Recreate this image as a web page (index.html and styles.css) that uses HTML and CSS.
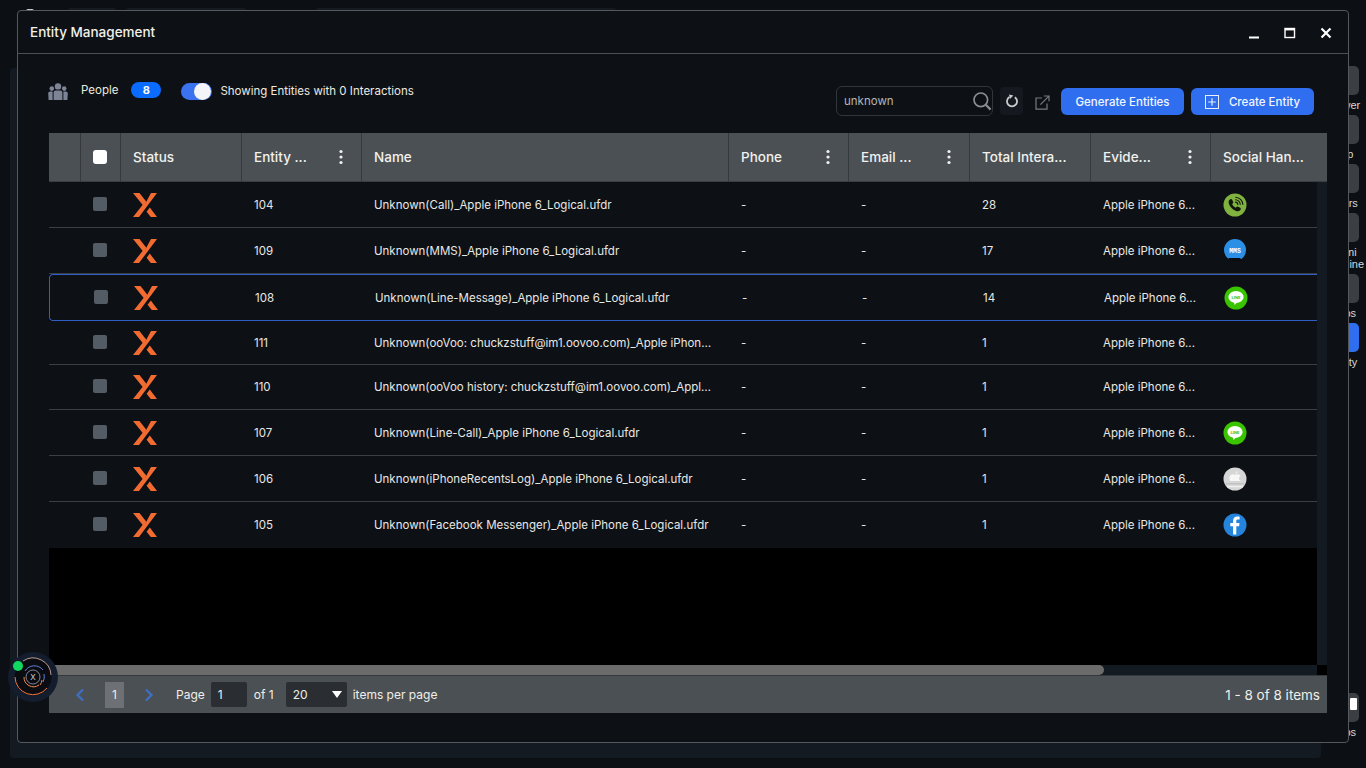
FILE: index.html
```html
<!DOCTYPE html>
<html lang="en">
<head>
<meta charset="utf-8">
<title>Entity Management</title>
<link rel="stylesheet" href="styles.css">
</head>
<body>
<svg class="defs" width="0" height="0" aria-hidden="true">
  <symbol id="logo-x" viewBox="0 0 24 24">
    <polygon fill="#f26c32" points="18,0 24,0 6,24 0,24 11.5,9.5 12.3,10.6"/>
    <polygon fill="#f26c32" points="0,0 6.5,0 13.5,9 10.6,13"/>
    <polygon fill="#f26c32" points="16.8,14.6 24,24 17.8,24 13.6,18.7"/>
  </symbol>
  <symbol id="kebab" viewBox="0 0 4 16">
    <circle cx="2" cy="2.5" r="1.6" fill="#f1f1f1"/><circle cx="2" cy="8" r="1.6" fill="#f1f1f1"/><circle cx="2" cy="13.5" r="1.6" fill="#f1f1f1"/>
  </symbol>
  <symbol id="ic-line" viewBox="0 0 24 24">
    <circle cx="12" cy="12" r="11.5" fill="#3ac400"/>
    <ellipse cx="12" cy="11" rx="7.6" ry="6" fill="#fff"/>
    <polygon points="10,16 13.5,16 10.5,19" fill="#fff"/>
    <text x="12" y="13" text-anchor="middle" class="line-txt">LINE</text>
  </symbol>
</svg>

<div class="scene">
  <div class="topbar">
    <span class="chip chip-a"></span><span class="chip chip-b"></span><span class="chip chip-c"></span><span class="chip chip-d"></span>
  </div>
  <div class="scene-main">
    <div class="bg-panel"></div>
    <nav class="sidebar">
      <div class="side-item"><span class="side-btn"></span><span class="side-label">Viewer</span></div>
      <div class="side-item"><span class="side-btn"></span><span class="side-label">App</span></div>
      <div class="side-item"><span class="side-btn"></span><span class="side-label">Users</span></div>
      <div class="side-item"><span class="side-btn"></span><span class="side-label">Gemi<br>Timeline</span></div>
      <div class="side-item"><span class="side-btn"></span><span class="side-label">Apps</span></div>
      <div class="side-item"><span class="side-btn side-active"></span><span class="side-label">Entity</span></div>
      <div class="side-item side-last"><span class="side-btn"><span class="side-glyph"></span></span><span class="side-label">Apps</span></div>
    </nav>
  </div>
</div>

<section class="modal">
  <header class="modal-head">
    <h1 class="modal-title">Entity Management</h1>
    <div class="win-controls">
      <svg class="win-ic" width="14" height="14" viewBox="0 0 14 14"><rect x="2" y="10.5" width="10" height="2" fill="#fff"/></svg>
      <svg class="win-ic" width="14" height="14" viewBox="0 0 14 14"><rect x="2" y="2.5" width="9.5" height="9" fill="none" stroke="#fff" stroke-width="1.4"/><rect x="2" y="2" width="9.5" height="2.4" fill="#fff"/></svg>
      <svg class="win-ic" width="14" height="14" viewBox="0 0 14 14"><path d="M2.5 2.5 11.5 11.5M11.5 2.5 2.5 11.5" stroke="#fff" stroke-width="2.2" fill="none"/></svg>
    </div>
  </header>

  <div class="toolbar">
    <div class="tool-left">
      <svg class="people-ic" width="20" height="17" viewBox="0 0 20 17" fill="#7d8496">
        <circle cx="10" cy="3.4" r="3.2"/><circle cx="3.8" cy="5.6" r="2.3"/><circle cx="16.2" cy="5.6" r="2.3"/>
        <path d="M5.6 9.2a2 2 0 0 1 2-1.8h4.8a2 2 0 0 1 2 1.8V17H5.6z"/>
        <path d="M0.2 10.4a1.8 1.8 0 0 1 1.8-1.8h2.6V17H0.6z"/><path d="M15.4 8.6H18a1.8 1.8 0 0 1 1.8 1.8l-.4 6.6h-4z"/>
      </svg>
      <span class="people-label">People</span>
      <span class="badge">8</span>
      <span class="toggle"><span class="knob"></span></span>
      <span class="toggle-label">Showing Entities with 0 Interactions</span>
    </div>
    <div class="tool-right">
      <div class="search">
        <span class="search-text">unknown</span>
        <svg width="20" height="20" viewBox="0 0 20 20" fill="none" stroke="#8b8e90"><circle cx="8.8" cy="8.8" r="6.8" stroke-width="1.7"/><path d="M13.8 13.8 18.6 18.6" stroke-width="2.2"/></svg>
      </div>
      <span class="refresh">
        <svg width="14" height="14" viewBox="0 0 14 14" fill="none"><path d="M9.8 3.2a5 5 0 1 1-5.4-.1" stroke="#c9cbcd" stroke-width="1.8"/><polygon points="4,0.4 8.4,1.4 4.9,5" fill="#c9cbcd"/></svg>
      </span>
      <svg class="export" width="15" height="15" viewBox="0 0 15 15" fill="none" stroke="#777b80" stroke-width="1.2"><path d="M7 3H1v11.2h11V8.4"/><path d="M5.4 9.6 13.6 1.4M8.8 1h5.2v5.2"/></svg>
      <button class="btn" type="button">Generate Entities</button>
      <button class="btn btn-create" type="button">
        <svg width="14" height="14" viewBox="0 0 14 14" fill="none" stroke="#e8efff" stroke-width="1"><rect x=".5" y=".5" width="13" height="13"/><path d="M7 3.2v7.6M3.2 7h7.6" stroke-width="1.2"/></svg>
        Create Entity
      </button>
    </div>
  </div>

  <div class="grid-wrap">
    <div class="grid-row grid-head">
      <div class="hc"></div>
      <div class="hc hc-check"><span class="check-head"></span></div>
      <div class="hc"><span>Status</span></div>
      <div class="hc"><span>Entity ...</span><svg class="keb" width="4" height="16"><use href="#kebab"/></svg></div>
      <div class="hc"><span>Name</span></div>
      <div class="hc"><span>Phone</span><svg class="keb" width="4" height="16"><use href="#kebab"/></svg></div>
      <div class="hc"><span>Email ...</span><svg class="keb" width="4" height="16"><use href="#kebab"/></svg></div>
      <div class="hc"><span>Total Intera...</span></div>
      <div class="hc"><span>Evide...</span><svg class="keb" width="4" height="16"><use href="#kebab"/></svg></div>
      <div class="hc hc-last"><span>Social Han...</span></div>
    </div>

    <div class="grid-body">
      <div class="rows">
        <div class="grid-row row h46">
          <div></div><div class="c-check"><span class="check"></span></div>
          <div class="c-status"><svg width="24" height="24"><use href="#logo-x"/></svg></div>
          <div class="c">104</div><div class="c c-name">Unknown(Call)_Apple iPhone 6_Logical.ufdr</div>
          <div class="c">-</div><div class="c">-</div><div class="c">28</div><div class="c c-ev">Apple iPhone 6...</div>
          <div class="c-social">
            <svg width="24" height="24" viewBox="0 0 24 24"><circle cx="12" cy="12" r="11.5" fill="#7fb23f"/><path d="M6.6 6.8c1-1 2-1 2.5 0l1.1 2c.3.7.1 1.2-.5 1.7l-.6.5c.7 1.700 2 3 3.700 3.800l.6-.7c.5-.6 1-.7 1.700-.4l2 1.100c1 .5.9 1.500.1 2.400-1.200 1.300-2.900 1.300-4.700.5-3.400-1.500-5.500-3.900-6.600-7-.5-1.600-.3-2.900.7-3.900z" fill="#12170d"/><path d="M12.200 6.700a5.200 5.200 0 0 1 5.100 5.100M12.400 4.200a7.700 7.700 0 0 1 7.400 7.500M12.100 9.100a2.800 2.800 0 0 1 2.800 2.800" stroke="#12170d" stroke-width="1.100" fill="none"/></svg>
          </div>
        </div>
        <div class="grid-row row h46">
          <div></div><div class="c-check"><span class="check"></span></div>
          <div class="c-status"><svg width="24" height="24"><use href="#logo-x"/></svg></div>
          <div class="c">109</div><div class="c c-name">Unknown(MMS)_Apple iPhone 6_Logical.ufdr</div>
          <div class="c">-</div><div class="c">-</div><div class="c">17</div><div class="c c-ev">Apple iPhone 6...</div>
          <div class="c-social">
            <svg width="24" height="24" viewBox="0 0 24 24"><circle cx="12" cy="11" r="11" fill="#2b8fe6"/><path d="M5 20c4 3.500 11 3.500 14 .5-1 0-1.500-.7-2-1.500H6z" fill="#0a0c10"/><text x="12" y="13.500" text-anchor="middle" class="mms-txt">MMS</text></svg>
          </div>
        </div>
        <div class="grid-row row h47 row-selected">
          <div></div><div class="c-check"><span class="check"></span></div>
          <div class="c-status"><svg width="24" height="24"><use href="#logo-x"/></svg></div>
          <div class="c">108</div><div class="c c-name">Unknown(Line-Message)_Apple iPhone 6_Logical.ufdr</div>
          <div class="c">-</div><div class="c">-</div><div class="c">14</div><div class="c c-ev">Apple iPhone 6...</div>
          <div class="c-social"><svg width="24" height="24"><use href="#ic-line"/></svg></div>
        </div>
        <div class="grid-row row h44">
          <div></div><div class="c-check"><span class="check"></span></div>
          <div class="c-status"><svg width="24" height="24"><use href="#logo-x"/></svg></div>
          <div class="c">111</div><div class="c c-name">Unknown(ooVoo: chuckzstuff@im1.oovoo.com)_Apple iPhone 6_Logical.ufdr</div>
          <div class="c">-</div><div class="c">-</div><div class="c">1</div><div class="c c-ev">Apple iPhone 6...</div>
          <div class="c-social"></div>
        </div>
        <div class="grid-row row h45">
          <div></div><div class="c-check"><span class="check"></span></div>
          <div class="c-status"><svg width="24" height="24"><use href="#logo-x"/></svg></div>
          <div class="c">110</div><div class="c c-name">Unknown(ooVoo history: chuckzstuff@im1.oovoo.com)_Apple iPhone 6_Logical.ufdr</div>
          <div class="c">-</div><div class="c">-</div><div class="c">1</div><div class="c c-ev">Apple iPhone 6...</div>
          <div class="c-social"></div>
        </div>
        <div class="grid-row row h46">
          <div></div><div class="c-check"><span class="check"></span></div>
          <div class="c-status"><svg width="24" height="24"><use href="#logo-x"/></svg></div>
          <div class="c">107</div><div class="c c-name">Unknown(Line-Call)_Apple iPhone 6_Logical.ufdr</div>
          <div class="c">-</div><div class="c">-</div><div class="c">1</div><div class="c c-ev">Apple iPhone 6...</div>
          <div class="c-social"><svg width="24" height="24"><use href="#ic-line"/></svg></div>
        </div>
        <div class="grid-row row h46">
          <div></div><div class="c-check"><span class="check"></span></div>
          <div class="c-status"><svg width="24" height="24"><use href="#logo-x"/></svg></div>
          <div class="c">106</div><div class="c c-name">Unknown(iPhoneRecentsLog)_Apple iPhone 6_Logical.ufdr</div>
          <div class="c">-</div><div class="c">-</div><div class="c">1</div><div class="c c-ev">Apple iPhone 6...</div>
          <div class="c-social">
            <svg width="24" height="24" viewBox="0 0 24 24"><circle cx="12" cy="12" r="11.500" fill="#d6d6d6"/><path d="M12.300 6.500c.3-1.200 1.200-2 2.300-2.200 0 1.300-.9 2.300-2.300 2.200zM8.600 7.500c1.400-.5 2.400.3 3.500.3s1.900-.8 3.500-.3c.8.300 1.400.8 1.800 1.400-2.200 1.400-1.700 4.100.4 5H7.200c-1.500-2.700-.6-5.600 1.400-6.400z" fill="#f7f7f7"/><rect x="3" y="16" width="18" height="1.500" fill="#c2c2c2"/><rect x="4" y="18.800" width="16" height="1.500" fill="#eeeeee"/></svg>
          </div>
        </div>
        <div class="grid-row row h46">
          <div></div><div class="c-check"><span class="check"></span></div>
          <div class="c-status"><svg width="24" height="24"><use href="#logo-x"/></svg></div>
          <div class="c">105</div><div class="c c-name">Unknown(Facebook Messenger)_Apple iPhone 6_Logical.ufdr</div>
          <div class="c">-</div><div class="c">-</div><div class="c">1</div><div class="c c-ev">Apple iPhone 6...</div>
          <div class="c-social">
            <svg width="24" height="24" viewBox="0 0 24 24"><circle cx="12" cy="12" r="11.500" fill="#2585dc"/><path d="M13.300 21.500v-8.300h2.800l.4-3.200h-3.200V8c0-.9.300-1.500 1.600-1.500h1.700V3.700c-.4 0-1.300-.1-2.400-.1-2.400 0-4.100 1.500-4.100 4.200V10H7.300v3.200h2.800v8.300z" fill="#fff"/></svg>
          </div>
        </div>
      </div>
      <div class="vscroll"></div>
    </div>

    <div class="hscroll"><div class="hscroll-track"><span class="hscroll-thumb"></span></div><span class="hscroll-corner"></span></div>

    <footer class="pager">
      <svg class="chev chev-prev" width="10" height="14" viewBox="0 0 10 14" fill="none" stroke="#3f6fc4" stroke-width="2.200"><path d="M8 1.500 2.500 7 8 12.500"/></svg>
      <span class="page-num">1</span>
      <svg class="chev chev-next" width="10" height="14" viewBox="0 0 10 14" fill="none" stroke="#3f6fc4" stroke-width="2.200"><path d="M2 1.500 7.500 7 2 12.500"/></svg>
      <span class="pg-page">Page</span>
      <span class="pg-input">1</span>
      <span class="pg-of">of 1</span>
      <span class="pg-select">20<svg width="10" height="7" viewBox="0 0 10 7"><polygon points="0,0 10,0 5,7" fill="#fff"/></svg></span>
      <span class="pg-items">items per page</span>
      <span class="pg-count">1 - 8 of 8 items</span>
    </footer>
  </div>
</section>

<div class="assistant">
  <svg width="50" height="50" viewBox="0 0 50 50" fill="none">
    <circle cx="25" cy="25" r="25" fill="#141d2e"/>
    <circle cx="25" cy="25" r="18.500" fill="#0a0c11"/>
    <path d="M7 25a18 18 0 0 0 32 11" stroke="#f0793c" stroke-width="1"/>
    <path d="M15 9a18 18 0 0 1 28 14" stroke="#e7b9a3" stroke-width=".8"/>
    <path d="M16 25a9.500 9.500 0 0 0 15 8M34 28a9.500 9.500 0 0 1 -2 5" stroke="#ef8a4f" stroke-width="1"/>
    <path d="M17 19a11 11 0 0 1 18 -1 M36 22a11 11 0 0 1-1 8" stroke="#5d83d8" stroke-width="1"/>
    <circle cx="25" cy="25" r="7" stroke="#9aa3ba" stroke-width=".8"/>
    <text x="25" y="28" text-anchor="middle" class="assist-x">X</text>
  </svg>
  <span class="assist-dot"></span>
</div>
</body>
</html>
```

FILE: styles.css
```css
* { box-sizing: border-box; }
html, body { margin: 0; padding: 0; height: 100%; }
body {
  width: 1366px;
  height: 768px;
  overflow: hidden;
  position: relative;
  background: #0c0f14;
  font-family: "Inter", "Liberation Sans", sans-serif;
  color: #e9e9e9;
}
.defs { position: absolute; }
.line-txt { font: 700 4px "Inter", sans-serif; fill: #3ac400; }
.mms-txt { font: 700 6.5px "Liberation Mono", monospace; fill: #fff; }
.assist-x { font: 400 8px "Inter", sans-serif; fill: #c9ccd6; }

/* backdrop */
.scene { height: 768px; display: flex; flex-direction: column; }
.topbar { height: 66px; padding: 8px 0 0 26px; display: flex; gap: 10px; }
.chip { height: 3px; background: #151a21; border-radius: 2px 2px 0 0; }
.chip-a { width: 8px; background: #c9ccd0; margin-top: 1px; height: 2px; }
.chip-b { width: 48px; margin-left: 24px; }
.chip-c { width: 120px; }
.chip-d { width: 300px; margin-left: 60px; }
.scene-main { flex: 1; display: flex; }
.bg-panel { width: 1311px; height: 690px; margin: 2px 0 0 10px; background: #141a22; border-radius: 4px; }
.sidebar { flex: 1; display: flex; flex-direction: column; align-items: center; gap: 4px; }
.side-item { display: flex; flex-direction: column; align-items: center; width: 100%; }
.side-last { margin-top: auto; margin-bottom: 30px; }
.side-btn { width: 30px; height: 29px; border-radius: 5px; background: #3b3f44; display: flex; justify-content: flex-end; padding: 5px 2px 0 0; }
.side-active { background: #2f6fef; }
.side-glyph { width: 7px; height: 12px; background: #fff; border-radius: 1px; }
.side-label { font-size: 11px; line-height: 12px; padding-top: 4px; text-align: center; color: #d5d7da; font-family: "Liberation Sans", sans-serif; white-space: nowrap; }

/* window */
.modal {
  position: absolute;
  left: 17px; top: 10px;
  width: 1332px; height: 733px;
  background: #0d1015;
  border: 1px solid #55595e;
  border-radius: 4px;
  display: flex;
  flex-direction: column;
}
.modal-head {
  height: 43px;
  flex: none;
  border-bottom: 1px solid #4c4f54;
  display: flex;
  align-items: center;
  justify-content: space-between;
  padding: 0 15px 1px 12px;
}
.modal-title { margin: 0; font-size: 13.500px; font-weight: 500; color: #f0f0ea; }
.win-controls { display: flex; gap: 22px; margin-top: 2px; }

.toolbar {
  height: 79px;
  flex: none;
  padding: 0 34px 0 30px;
  display: flex;
  justify-content: space-between;
}
.tool-left { display: flex; align-items: flex-start; padding-top: 29px; }
.people-ic { flex: none; }
.people-label { font-size: 11.500px; margin: 0 0 0 13px; line-height: 15px; color: #eceade; }
.badge { width: 30px; height: 16px; margin: -1px 0 0 13px; border-radius: 8px; background: #0a6cff; color: #fff; font-size: 11px; font-weight: 700; display: flex; align-items: center; justify-content: center; }
.toggle { width: 31px; height: 17px; margin: 0 0 0 20px; border-radius: 9px; background: #3b72f0; position: relative; }
.knob { position: absolute; right: 1px; top: 0; width: 17px; height: 17px; border-radius: 50%; background: #f4f5f8; }
.toggle-label { font-size: 11.500px; margin: 1px 0 0 8px; line-height: 15px; color: #eceae2; }
.tool-right { display: flex; align-items: flex-start; padding-top: 32px; }
.search { width: 157px; height: 30px; border: 1px solid #32363b; border-radius: 6px; display: flex; align-items: center; justify-content: space-between; padding: 0 0 0 7px; margin-top: 0; }
.search-text { font-size: 11.500px; color: #b4b6b8; margin-top: -1px; }
.search svg { margin-right: 0; flex: none; }
.refresh { width: 23px; height: 28px; margin: 1px 0 0 7px; background: #15191f; border-radius: 4px; display: flex; align-items: center; justify-content: center; }
.export { margin: 9px 0 0 12px; flex: none; }
.btn {
  height: 27px;
  width: 123px;
  margin: 2px 0 0 7px;
  border: 0;
  border-radius: 6px;
  background: #2f6fef;
  color: #f2f6ff;
  font: 500 11.500px "Inter", sans-serif;
  padding: 0;
  display: flex;
  align-items: center;
  justify-content: center;
}
.export + .btn { margin-left: 11px; }
.btn-create { gap: 10px; }

/* table */
.grid-wrap { margin: 0 21px 0 31px; display: flex; flex-direction: column; }
.grid-row { display: grid; grid-template-columns: 32px 40px 121px 120px 367px 120px 121px 121px 120px 106px; }
.grid-head { grid-template-columns: 32px 40px 121px 120px 367px 120px 121px 121px 120px 116px; height: 49px; background: #4b5054; border-bottom: 1px solid #3a3e42; }
.hc { border-right: 1px solid #35393d; display: flex; align-items: center; justify-content: space-between; padding: 0 18px 0 12px; font-size: 13.500px; font-weight: 500; color: #f1f1ee; white-space: nowrap; overflow: hidden; }
.hc-check { justify-content: flex-start; padding: 0 0 0 12px; }
.hc-last { border-right: 0; padding-right: 0; }
.check-head { width: 14px; height: 14px; background: #fff; border-radius: 3px; }
.keb { flex: none; }

.grid-body { height: 483px; background: #000; display: flex; }
.rows { width: 1268px; }
.vscroll { width: 10px; background: #141a22; }
.row { background: #0d1015; border-bottom: 1px solid #3b3e42; align-items: center; font-size: 11.500px; color: #e8e8e4; }
.h44 { height: 44px; } .h45 { height: 45px; } .h46 { height: 46px; } .h47 { height: 47px; }
.row:last-child { border-bottom: 0; }
.row-selected { border: 1px solid #2f5fc4; border-right: 0; border-radius: 4px 0 0 4px; margin-top: 0; }
.c-check { padding-left: 12px; display: flex; }
.check { width: 14px; height: 14px; background: #535b64; border-radius: 2px; margin-top: -2px; }
.c-status { padding-left: 12px; display: flex; }
.c-status svg { display: block; }
.c { padding: 0 16px 0 12px; white-space: nowrap; overflow: hidden; text-overflow: ellipsis; }
.c-name { padding-left: 12px; }
.c-social { padding-left: 12px; display: flex; height: 24px; }

.hscroll { height: 11px; display: flex; border-bottom: 1px solid #34383c; }
.hscroll-track { width: 1268px; background: #141a22; }
.hscroll-thumb { display: block; width: 1055px; height: 10px; background: #6b6b6b; border-radius: 0 5px 5px 0; }
.hscroll-corner { width: 10px; background: #000; }

.pager { height: 37px; background: #4b5054; display: flex; align-items: center; font-size: 12px; color: #efefe9; }
.chev { flex: none; }
.chev-prev { margin-left: 26px; }
.page-num { width: 19px; height: 26px; margin-left: 20px; background: #6d7074; display: flex; align-items: center; justify-content: center; }
.chev-next { margin-left: 20px; }
.pg-page { margin-left: 22px; }
.pg-input { width: 36px; height: 25px; margin-left: 6px; padding-left: 7px; background: #2a2e33; display: flex; align-items: center; border-radius: 2px; }
.pg-of { margin-left: 7px; }
.pg-select { width: 61px; height: 25px; margin-left: 12px; padding: 0 5px 0 7px; background: #2a2e33; border-radius: 2px; display: flex; align-items: center; justify-content: space-between; }
.pg-items { margin-left: 6px; }
.pg-count { margin-left: auto; margin-right: 7px; font-size: 13.500px; }

/* assistant bubble */
.assistant { position: absolute; left: 8px; top: 652px; width: 50px; height: 50px; }
.assistant svg { display: block; }
.assist-dot { position: absolute; left: 5px; top: 9px; width: 10px; height: 10px; border-radius: 50%; background: #12d860; }
```
